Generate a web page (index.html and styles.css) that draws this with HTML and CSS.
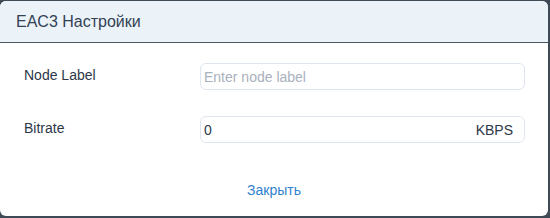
FILE: index.html
```html
<!DOCTYPE html>
<html>
<head>
<meta charset="utf-8">
<link rel="stylesheet" href="styles.css">
</head>
<body>
<div class="modal">
  <div class="modal-header">
    <h2 class="modal-title">EAC3 Настройки</h2>
  </div>
  <div class="modal-body">
    <div class="field">
      <label class="field-label">Node Label</label>
      <div class="input-box"><input class="input" type="text" placeholder="Enter node label"></div>
    </div>
    <div class="field">
      <label class="field-label">Bitrate</label>
      <div class="input-box"><input class="input" type="text" value="0"><span class="unit">KBPS</span></div>
    </div>
  </div>
  <div class="modal-footer">
    <a class="close-link" href="#">Закрыть</a>
  </div>
</div>
</body>
</html>
```
FILE: styles.css
```css
html, body {
  margin: 0;
  padding: 0;
}
body {
  background: #3e4a55;
  width: 550px;
  height: 218px;
  overflow: hidden;
  font-family: "Liberation Sans", Arial, sans-serif;
  color: #2d3748;
}
.modal {
  margin-top: 1px;
  width: 548px;
  height: 215px;
  background: #ffffff;
  border-radius: 6px;
  overflow: hidden;
  display: flex;
  flex-direction: column;
}
.modal-header {
  height: 41px;
  background: #ebf3f8;
  border-bottom: 1px solid #4a5866;
  display: flex;
  align-items: center;
  padding-left: 16px;
}
.modal-title {
  margin: 0;
  font-size: 16px;
  font-weight: normal;
  color: #334155;
}
.modal-body {
  padding: 20px 23px 0 24px;
  display: flex;
  flex-direction: column;
  gap: 26px;
}
.field {
  display: flex;
  align-items: center;
}
.field-label {
  width: 176px;
  font-size: 14px;
  color: #2d3748;
  position: relative;
  top: -2px;
}
.input-box {
  flex: 1;
  height: 25px;
  border: 1px solid #dfe5ee;
  border-radius: 6px;
  display: flex;
  align-items: center;
  padding: 0 11px 0 3px;
}
.input {
  flex: 1;
  border: none;
  outline: none;
  background: transparent;
  font-family: "Liberation Sans", Arial, sans-serif;
  font-size: 14px;
  color: #2d3748;
  padding: 0;
  margin: 0;
  min-width: 0;
}
.input::placeholder {
  color: #a9b1bd;
}
.unit {
  font-size: 14px;
  color: #2d3748;
}
.modal-footer {
  flex: 1;
  display: flex;
  justify-content: center;
  align-items: center;
  padding-top: 20px;
}
.close-link {
  font-size: 14px;
  color: #3182ce;
  text-decoration: none;
}
```
